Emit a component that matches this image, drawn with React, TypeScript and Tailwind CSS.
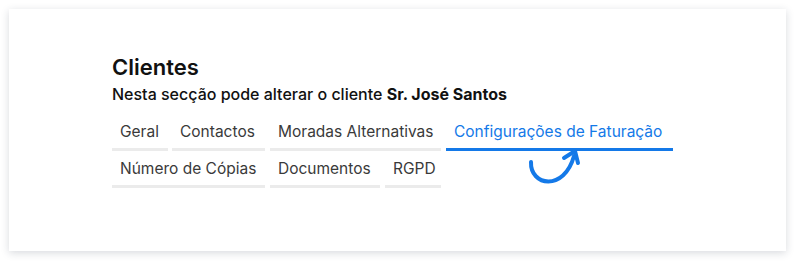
import React from "react";

const row1 = [
  { label: "Geral", w: 56, ml: 0 },
  { label: "Contactos", w: 93, ml: 4 },
  { label: "Moradas Alternativas", w: 171, ml: 5 },
  { label: "Configurações de Faturação", w: 227, ml: 5, active: true },
];
const row2 = [
  { label: "Número de Cópias", w: 153, ml: 0 },
  { label: "Documentos", w: 110, ml: 5 },
  { label: "RGPD", w: 56, ml: 5 },
];

function Tab({ label, w, ml, active }: { label: string; w: number; ml: number; active?: boolean }) {
  return (
    <div
      style={{ width: w, marginLeft: ml }}
      className={
        "h-[37px] pl-2 pt-[8px] text-[15.5px] leading-[20px] whitespace-nowrap border-b-[3px] " +
        (active ? "border-[#1479e8] text-[#1479e8]" : "border-[#ebebeb] text-[#3a3a3a]")
      }
    >
      {label}
    </div>
  );
}

export default function App() {
  return (
    <div className="w-[800px] h-[266px] bg-white pt-[9px] pl-[9px]" style={{ fontFamily: "Inter, 'Open Sans', sans-serif" }}>
      <div className="relative w-[777px] h-[242px] bg-white shadow-[0_2px_8px_rgba(40,50,70,0.18)] pl-[103px] pt-[44px]">
        <h1 className="text-[22px] leading-[28px] font-semibold text-[#111]">Clientes</h1>
        <p className="text-[16px] leading-[22px] font-medium text-[#111] mt-[2px]">
          Nesta secção pode alterar o cliente <span className="font-bold">Sr. José Santos</span>
        </p>
        <div className="mt-[9px] flex flex-col">
          <div className="flex">
            {row1.map((t) => (
              <Tab key={t.label} {...t} />
            ))}
          </div>
          <div className="flex">
            {row2.map((t) => (
              <Tab key={t.label} {...t} />
            ))}
          </div>
        </div>
        <svg
          className="absolute left-[511px] top-[139px]"
          width="70"
          height="45"
          viewBox="0 0 70 45"
          fill="none"
          stroke="#1479e8"
          strokeWidth="4"
          strokeLinecap="round"
          strokeLinejoin="round"
        >
          <path d="M11 14 C 10 38, 44 44, 54 8" />
          <path d="M44 10 L 55 3 L 58 15" />
        </svg>
      </div>
    </div>
  );
}
